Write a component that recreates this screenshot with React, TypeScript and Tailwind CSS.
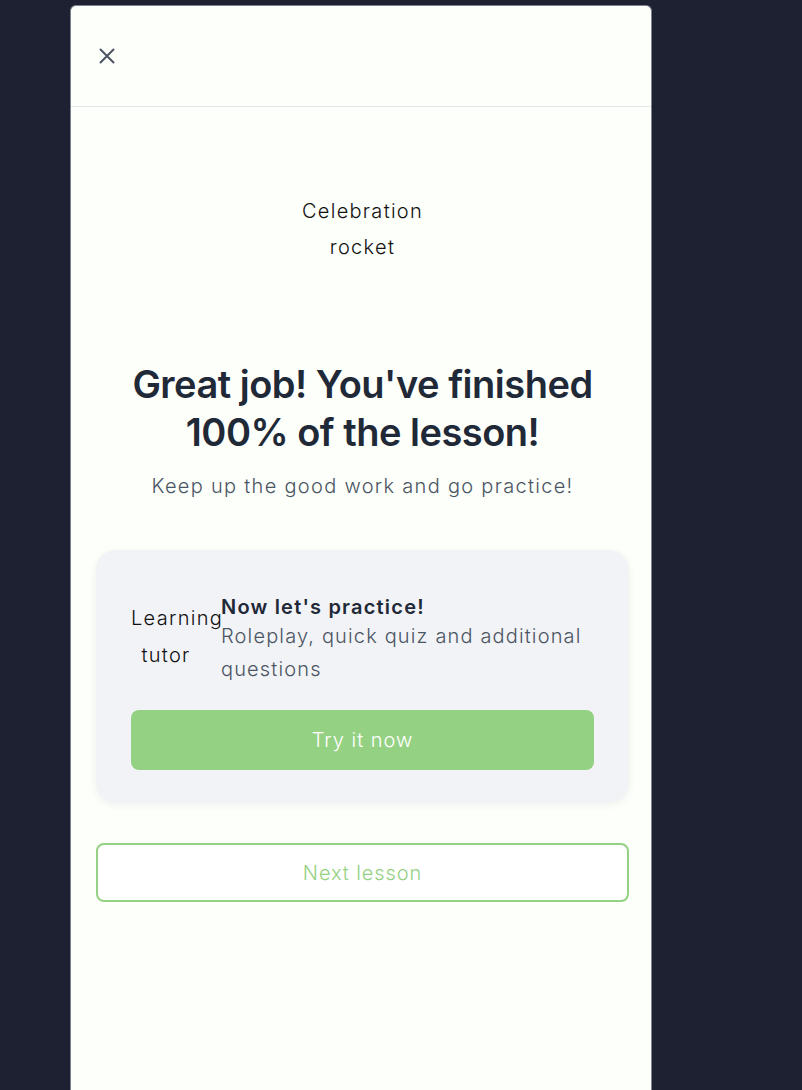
import React from "react";

export default function App() {
  return (
    <div className="min-h-[1090px] w-full bg-[#1e2132] flex justify-start" style={{ fontFamily: "Inter, 'Noto Sans', sans-serif" }}>
      <div className="ml-[70px] mt-[5px] w-[582px] min-h-[1085px] bg-[#fdfffa] rounded-t-[6px] border-x border-t border-[#7d8290] flex flex-col">
        <div className="h-[101px] border-b border-[#e5e7eb] flex items-center pl-[28px] shrink-0">
          <svg width="16" height="16" viewBox="0 0 16 16" fill="none" stroke="#4b5563" strokeWidth="2" strokeLinecap="round">
            <path d="M1.5 1.5L14.5 14.5M14.5 1.5L1.5 14.5" />
          </svg>
        </div>
        <div className="flex flex-col items-center pl-[25px] pr-[22px]">
          <div className="mt-[86px] w-36 h-36 text-center text-[20px] leading-[36px] text-[#111] font-light tracking-[1.3px]">Celebration rocket</div>
          <h1 className="mt-[23px] text-center text-[38px] leading-[48px] font-semibold text-[#1f2937] tracking-[-0.5px]">
            Great job! You've finished
            <br />
            100% of the lesson!
          </h1>
          <p className="mt-[16px] text-[20px] leading-[28px] text-[#4b5563] text-center font-light tracking-[1.3px]">Keep up the good work and go practice!</p>
          <div className="mt-[50px] w-full bg-[#f2f3f6] rounded-[20px] shadow-[0_2px_8px_rgba(0,0,0,0.06)] px-[35px] pt-[44px] pb-[33px] flex flex-col">
            <div className="flex items-start">
              <div className="w-[70px] shrink-0 text-center text-[20px] leading-[37px] text-[#111] font-light mt-[6px] tracking-[1.3px]">Learning tutor</div>
              <div className="ml-[20px] flex flex-col">
                <div className="text-[20px] leading-[26px] font-semibold text-[#1f2937] tracking-[1.2px]">Now let's practice!</div>
                <div className="text-[20px] leading-[33px] text-[#4b5563] font-light tracking-[1.15px]">Roleplay, quick quiz and additional questions</div>
              </div>
            </div>
            <button className="mt-[24px] h-[60px] w-full rounded-[8px] bg-[#95d183] text-white text-[20px] font-light tracking-[1px]">Try it now</button>
          </div>
          <button className="mt-[40px] h-[59px] w-full rounded-[8px] border-2 border-[#95d183] bg-white text-[#95d183] text-[20px] font-light tracking-[0.9px]">Next lesson</button>
        </div>
      </div>
    </div>
  );
}
